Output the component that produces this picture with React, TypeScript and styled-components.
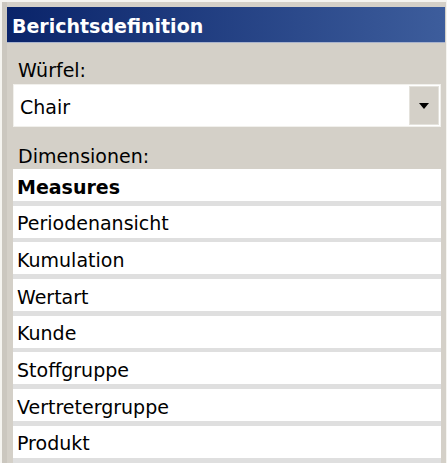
import styled, { createGlobalStyle } from 'styled-components';

//
//
//

const GlobalStyle = createGlobalStyle`
  html, body {
    margin: 0;
    padding: 0;
    background: #d4d0c8;
  }
  * {
    box-sizing: border-box;
  }
`;

const Frame = styled.div`
  width: 447px;
  height: 463px;
  display: flex;
  background: #d4d0c8;
  border-top: 2px solid #f5f4f0;
  border-left: 2px solid #f5f4f0;
  border-right: 1px solid #f5f4f0;
  padding-top: 5px;
  overflow: hidden;
  font-family: 'DejaVu Sans', Verdana, sans-serif;
  font-size: 19px;
  color: #000;
`;
const Splitter = styled.div`
  width: 5px;
  flex: none;
  background: #cbc7bf;
  margin-top: -5px;
`;
const Panel = styled.div`
  flex: 1;
  display: flex;
  flex-direction: column;
  margin-right: 1px;
`;
const Header = styled.div`
  height: 36px;
  padding: 3px 0 0 5px;
  line-height: 32px;
  font-weight: bold;
  color: #fff;
  background: linear-gradient(to right, #0a246a, #3d5d9c);
  border-bottom: 1px solid #a9b3cc;
  white-space: nowrap;
`;
const Content = styled.div`
  flex: 1;
  display: flex;
  flex-direction: column;
  padding: 0 4px 0 6px;
`;
const Label = styled.div<{ $top: number }>`
  height: 22px;
  line-height: 22px;
  padding-left: 5px;
  margin-top: ${(p) => p.$top}px;
`;
const Combo = styled.div`
  margin-top: 3.5px;
  height: 43px;
  display: flex;
  align-items: stretch;
  background: #fff;
  border: 1px solid #f1f0ec;
`;
const ComboText = styled.div`
  flex: 1;
  display: flex;
  align-items: center;
  padding: 2px 0 0 6px;
`;
const DropButton = styled.div`
  width: 30px;
  margin: 1px 1px 1px 0;
  display: flex;
  align-items: center;
  justify-content: center;
  background: #d4d0c8;
  border: 1px solid #e4e2dc;
`;
const List = styled.div`
  margin-top: 2.5px;
  flex: 1;
  display: flex;
  flex-direction: column;
  gap: 4.7px;
  background: #dfdfdf;
`;
const Row = styled.div<{ $bold?: boolean }>`
  height: 32px;
  flex: none;
  display: flex;
  align-items: center;
  padding: 3px 0 0 4px;
  background: #fff;
  font-weight: ${(p) => (p.$bold ? 'bold' : 'normal')};
`;

//
//
//

const dimensions = [
  'Periodenansicht',
  'Kumulation',
  'Wertart',
  'Kunde',
  'Stoffgruppe',
  'Vertretergruppe',
  'Produkt',
];

const App = () => {
  return (
    <>
      <GlobalStyle />
      <Frame>
        <Splitter />
        <Panel>
          <Header>Berichtsdefinition</Header>
          <Content>
            <Label $top={15.5}>Würfel:</Label>
            <Combo>
              <ComboText>Chair</ComboText>
              <DropButton>
                <svg width="10" height="6" viewBox="0 0 10 6">
                  <polygon points="0,0 10,0 5,6" fill="#000" />
                </svg>
              </DropButton>
            </Combo>
            <Label $top={17.5}>Dimensionen:</Label>
            <List>
              <Row $bold>Measures</Row>
              {dimensions.map((d) => (
                <Row key={d}>{d}</Row>
              ))}
            </List>
          </Content>
        </Panel>
      </Frame>
    </>
  );
};

export default App;
